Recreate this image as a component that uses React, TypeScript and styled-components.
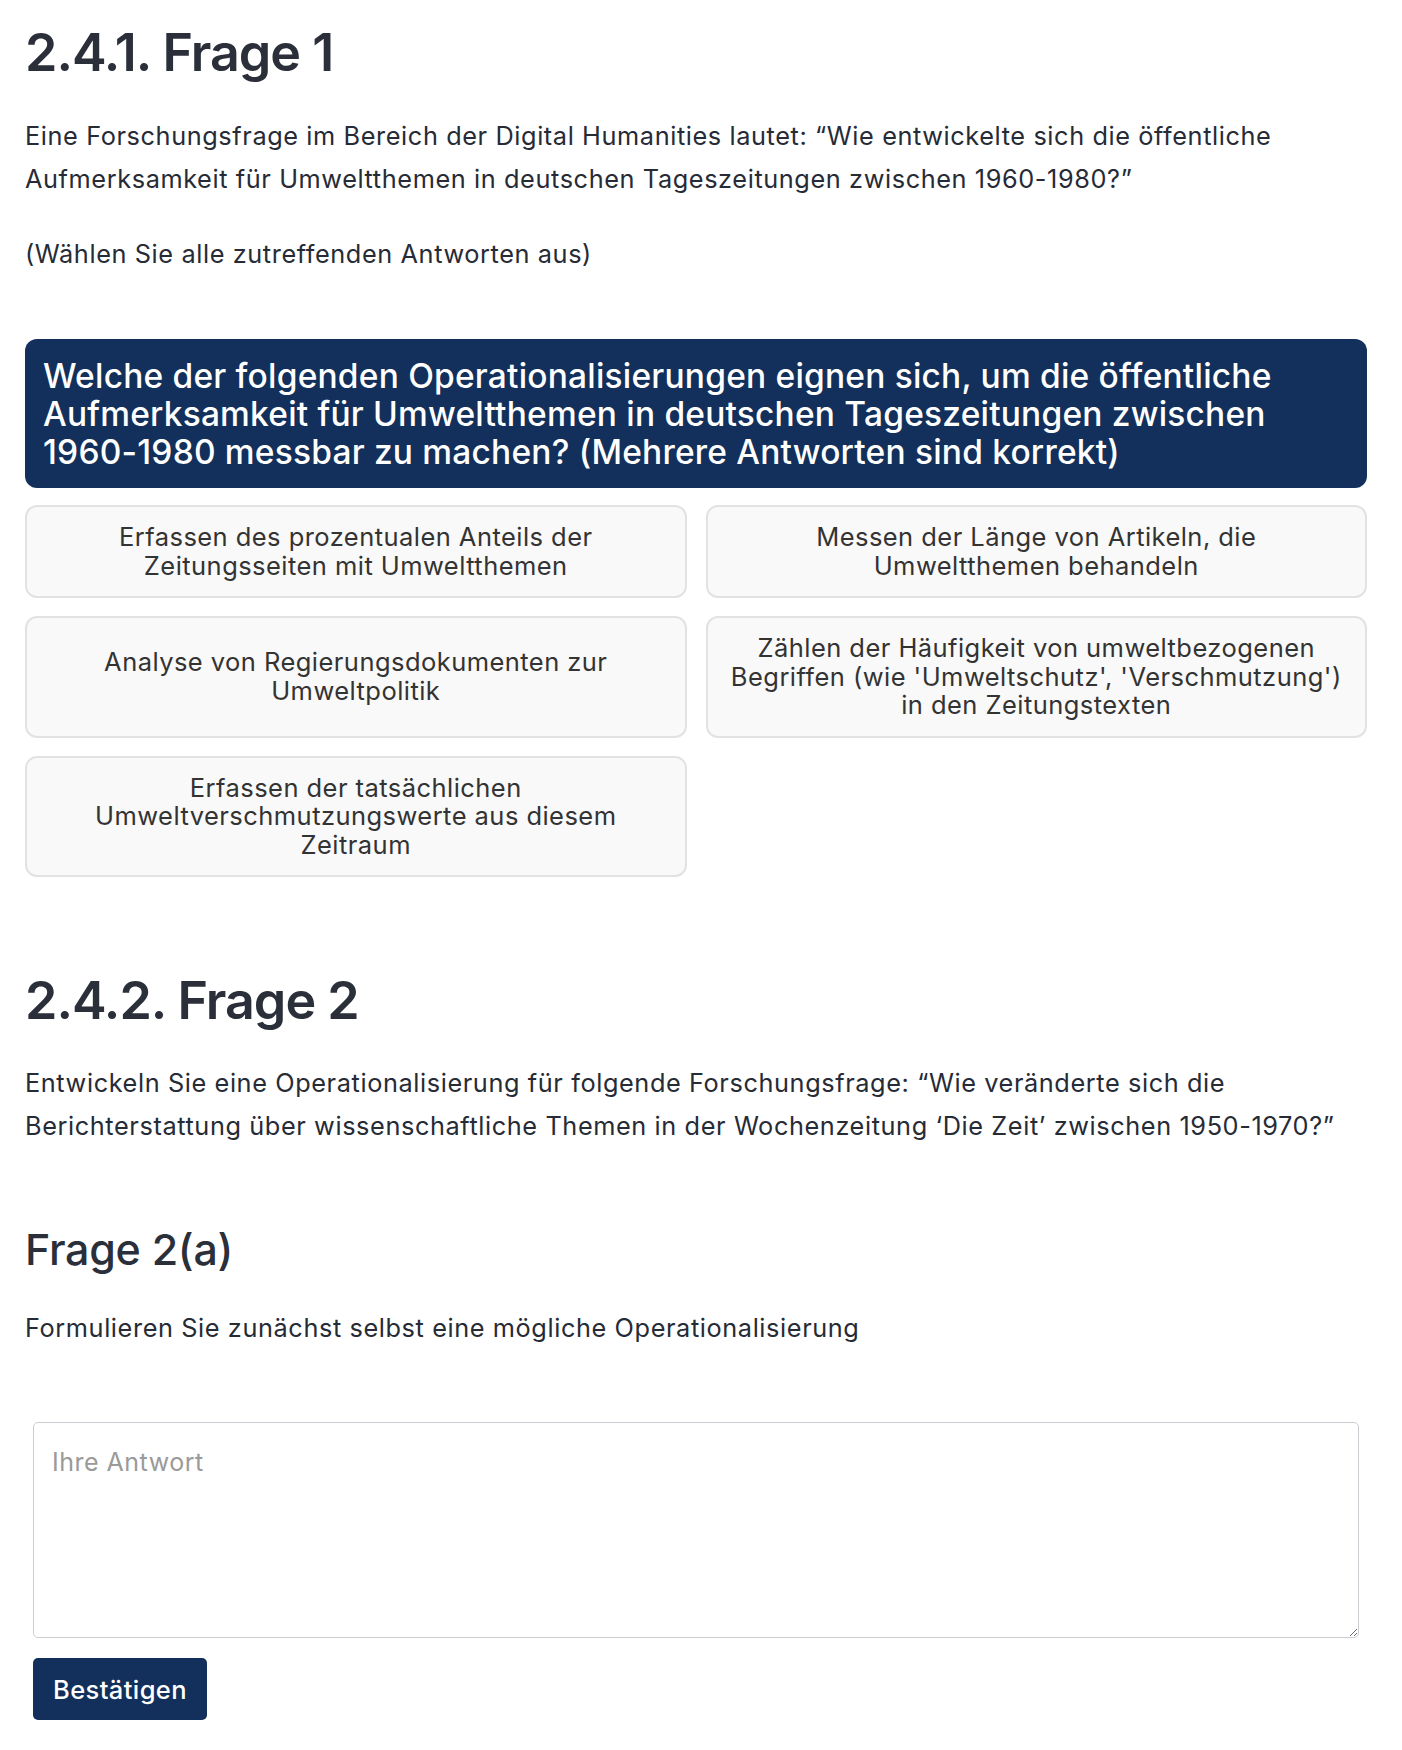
import React from "react";
import styled, { createGlobalStyle } from "styled-components";

const GlobalStyle = createGlobalStyle`
  html, body {
    margin: 0;
    padding: 0;
    background: #ffffff;
  }
  body {
    font-family: Inter, "Noto Sans", "Liberation Sans", sans-serif;
    color: #262b36;
  }
  * { box-sizing: border-box; }
`;

const Page = styled.main`
  width: 1402px;
  padding: 22px 35px 30px 25px;
  display: flex;
  flex-direction: column;
`;

const Heading = styled.h1`
  margin: 0;
  font-size: 52px;
  line-height: 62px;
  font-weight: 600;
  letter-spacing: -1px;
  color: #2a2f3a;
`;

const SubHeading = styled.h2`
  margin: 77px 0 0;
  font-size: 43px;
  line-height: 50px;
  font-weight: 500;
  letter-spacing: -0.3px;
  color: #2a2f3a;
`;

const Paragraph = styled.p<{ $top?: number }>`
  margin: ${(p) => p.$top ?? 32}px 0 0;
  font-size: 25.3px;
  line-height: 43px;
  letter-spacing: 0.6px;
  font-weight: 400;
  color: #262b36;
`;

const Quiz = styled.section`
  margin-top: 64px;
  display: flex;
  flex-direction: column;
  gap: 17px;
`;

const QuestionBox = styled.div`
  background: #12305b;
  color: #ffffff;
  border-radius: 12px;
  padding: 18px 18px 17px;
  font-size: 33.5px;
  line-height: 38px;
  letter-spacing: 0.2px;
  font-weight: 500;
`;

const OptionGrid = styled.div`
  display: grid;
  grid-template-columns: 1fr 1fr;
  column-gap: 19px;
  row-gap: 18px;
`;

const OptionCard = styled.button`
  display: flex;
  align-items: center;
  justify-content: center;
  text-align: center;
  background: #f9f9f9;
  border: 2px solid #e2e2e2;
  border-radius: 12px;
  padding: 16px 22px;
  font-family: Inter, "Noto Sans", "Liberation Sans", sans-serif;
  font-size: 25.5px;
  line-height: 28.5px;
  letter-spacing: 0.45px;
  font-weight: 400;
  color: #333333;
  cursor: pointer;
`;

const SectionHeading = styled(Heading)`
  margin-top: 93px;
`;

const AnswerForm = styled.form`
  margin: 73px 8px 0;
  display: flex;
  flex-direction: column;
  align-items: flex-start;
  gap: 20px;
`;

const AnswerArea = styled.textarea`
  width: 100%;
  height: 216px;
  border: 1.5px solid #c9cdd2;
  border-radius: 5px;
  padding: 21px 18px;
  font-family: Inter, "Noto Sans", "Liberation Sans", sans-serif;
  font-size: 25px;
  line-height: 36px;
  letter-spacing: 0.5px;
  color: #262b36;
  resize: vertical;
  &::placeholder {
    color: #9a9a9a;
  }
`;

const SubmitButton = styled.button`
  height: 62px;
  padding: 0 20px;
  background: #12305b;
  color: #ffffff;
  border: none;
  border-radius: 5px;
  font-family: Inter, "Noto Sans", "Liberation Sans", sans-serif;
  font-size: 25.5px;
  letter-spacing: 0.4px;
  font-weight: 500;
  cursor: pointer;
`;

const options = [
  "Erfassen des prozentualen Anteils der Zeitungsseiten mit Umweltthemen",
  "Messen der Länge von Artikeln, die Umweltthemen behandeln",
  "Analyse von Regierungsdokumenten zur Umweltpolitik",
  "Zählen der Häufigkeit von umweltbezogenen Begriffen (wie 'Umweltschutz', 'Verschmutzung') in den Zeitungstexten",
  "Erfassen der tatsächlichen Umweltverschmutzungswerte aus diesem Zeitraum",
];

export default function App() {
  return (
    <>
      <GlobalStyle />
      <Page>
        <Heading>2.4.1. Frage 1</Heading>
        <Paragraph $top={30}>
          Eine Forschungsfrage im Bereich der Digital Humanities lautet: “Wie entwickelte sich die öffentliche
          Aufmerksamkeit für Umweltthemen in deutschen Tageszeitungen zwischen 1960-1980?”
        </Paragraph>
        <Paragraph>(Wählen Sie alle zutreffenden Antworten aus)</Paragraph>

        <Quiz>
          <QuestionBox>
            Welche der folgenden Operationalisierungen eignen sich, um die öffentliche Aufmerksamkeit für
            Umweltthemen in deutschen Tageszeitungen zwischen 1960-1980 messbar zu machen? (Mehrere Antworten
            sind korrekt)
          </QuestionBox>
          <OptionGrid>
            {options.map((o) => (
              <OptionCard key={o} type="button">
                {o}
              </OptionCard>
            ))}
          </OptionGrid>
        </Quiz>

        <SectionHeading>2.4.2. Frage 2</SectionHeading>
        <Paragraph $top={29}>
          Entwickeln Sie eine Operationalisierung für folgende Forschungsfrage: “Wie veränderte sich die
          Berichterstattung über wissenschaftliche Themen in der Wochenzeitung ‘Die Zeit’ zwischen 1950-1970?”
        </Paragraph>

        <SubHeading>Frage 2(a)</SubHeading>
        <Paragraph $top={32}>Formulieren Sie zunächst selbst eine mögliche Operationalisierung</Paragraph>

        <AnswerForm onSubmit={(e) => e.preventDefault()}>
          <AnswerArea placeholder="Ihre Antwort" />
          <SubmitButton type="submit">Bestätigen</SubmitButton>
        </AnswerForm>
      </Page>
    </>
  );
}
